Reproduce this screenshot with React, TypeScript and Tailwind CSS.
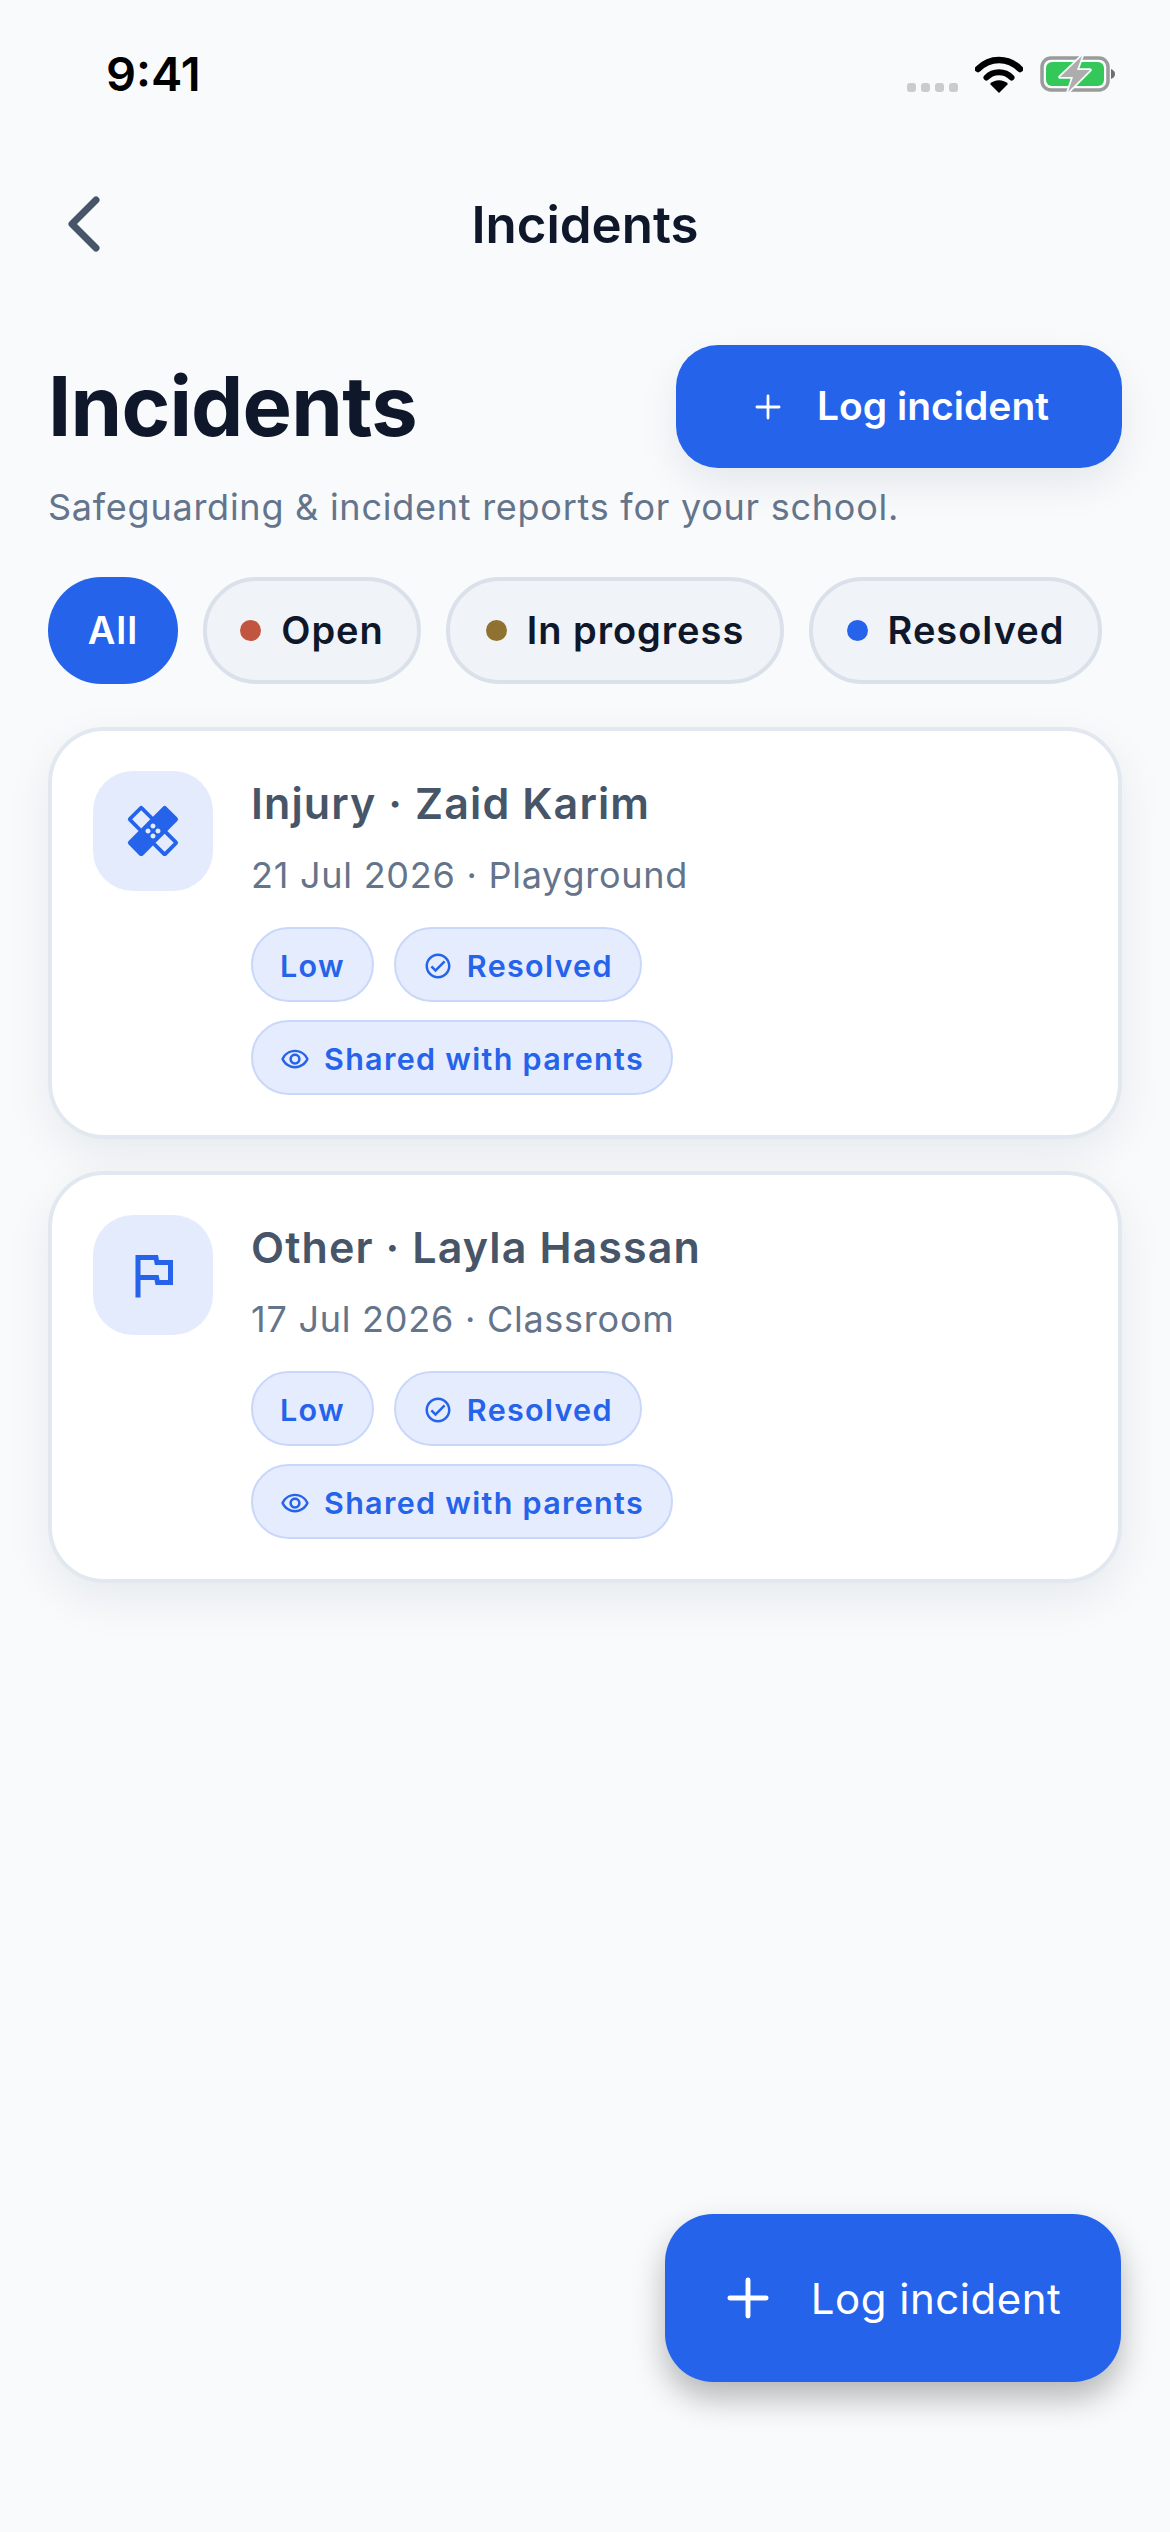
import { ChevronLeft, Plus } from "lucide-react";
import { MdOutlineCheckCircle, MdOutlineFlag, MdOutlineHealing, MdOutlineRemoveRedEye } from "react-icons/md";

const incidents = [
  { id: 1, title: "Injury · Zaid Karim", meta: "21 Jul 2026 · Playground", icon: "injury" },
  { id: 2, title: "Other · Layla Hassan", meta: "17 Jul 2026 · Classroom", icon: "other" },
];

function Wifi() {
  return (
    <svg width="48" height="37" viewBox="0 0 48 37" fill="none">
      <path d="M3 13C15 1 33 1 45 13" stroke="#000" strokeWidth="6.5" strokeLinecap="round" />
      <path d="M11.5 21.5C18 14.5 30 14.5 36.5 21.5" stroke="#000" strokeWidth="6" strokeLinecap="round" />
      <path d="M24 37L15 28C19.5 23 28.5 23 33 28Z" fill="#000" />
    </svg>
  );
}

function Battery() {
  return (
    <svg width="76" height="38" viewBox="0 0 76 38" fill="none">
      <rect x="2" y="3" width="66" height="32" rx="9" stroke="#9b9b9b" strokeWidth="3.5" />
      <rect x="6" y="7" width="58" height="24" rx="6" fill="#34c759" />
      <path d="M71 14c3 1 4 3 4 5s-1 4-4 5z" fill="#6f6f6f" />
      <path d="M42 1L20 22h13l-5 15 22-22H37z" fill="#adadad" stroke="#f8fafc" strokeWidth="3.5" strokeLinejoin="round" paintOrder="stroke" />
    </svg>
  );
}

function StatusBar() {
  return (
    <div className="h-[148px] flex justify-between pl-[106px] pr-[54px]">
      <span className="mt-[48px] h-[52px] text-[47px] leading-[52px] font-semibold text-black">9:41</span>
      <div className="mt-[55px] h-[38px] flex items-end gap-[17px]">
        <div className="flex gap-[5px] mb-[1px]">
          <span className="w-[9px] h-[9px] rounded-[3px] bg-[#c9cbcd]" />
          <span className="w-[9px] h-[9px] rounded-[3px] bg-[#c9cbcd]" />
          <span className="w-[9px] h-[9px] rounded-[3px] bg-[#c9cbcd]" />
          <span className="w-[9px] h-[9px] rounded-[3px] bg-[#c9cbcd]" />
        </div>
        <Wifi />
        <Battery />
      </div>
    </div>
  );
}

function Pill({ label, dot, width }: { label: string; dot: string; width: string }) {
  return (
    <div className={`h-[107px] ${width} flex items-center justify-center gap-[20px] rounded-full border-[4px] border-[#dae1ea] bg-[#f0f3f8]`}>
      <span className={`w-[21px] h-[21px] rounded-full ${dot}`} />
      <span className="text-[38px] font-semibold tracking-[1px] whitespace-nowrap text-[#0f172a]">{label}</span>
    </div>
  );
}

function Tag({ children }: { children: React.ReactNode }) {
  return (
    <div className="h-[75px] px-[27px] pt-[2px] flex items-center gap-[14px] rounded-full border-[2px] border-[#c9d8fa] bg-[#e5ecfd] text-[30.5px] font-semibold tracking-[1.3px] whitespace-nowrap text-[#2563eb]">
      {children}
    </div>
  );
}

function IncidentCard({ title, meta, icon }: { title: string; meta: string; icon: string }) {
  return (
    <div className="h-[412px] flex gap-[38px] rounded-[56px] border-[4px] border-[#e2e8f0] bg-white pl-[41px] pt-[40px] shadow-[0_16px_48px_rgba(15,23,42,0.07)]">
      <div className="w-[120px] h-[120px] flex items-center justify-center rounded-[40px] bg-[#e3ebfd] text-[#2563eb]">
        {icon === "injury" ? <MdOutlineHealing size={60} /> : <MdOutlineFlag size={60} />}
      </div>
      <div className="flex flex-col">
        <h2 className="h-[64px] text-[43px] leading-[64px] font-semibold tracking-[1.1px] text-[#475569]">{title}</h2>
        <p className="mt-[10px] h-[60px] text-[36px] leading-[60px] tracking-[0.75px] text-[#64748b]">{meta}</p>
        <div className="mt-[22px] flex gap-[20px]">
          <Tag>Low</Tag>
          <Tag>
            <MdOutlineCheckCircle size={30} />
            Resolved
          </Tag>
        </div>
        <div className="mt-[18px] flex">
          <Tag>
            <MdOutlineRemoveRedEye size={30} />
            Shared with parents
          </Tag>
        </div>
      </div>
    </div>
  );
}

export default function App() {
  return (
    <div className="relative w-[1170px] h-[2532px] overflow-hidden bg-[#f8fafc] font-['Inter',sans-serif]">
      <StatusBar />

      <div className="relative h-[152px] pt-[2px] flex items-center justify-center">
        <button className="absolute left-[36px] top-[28px] text-[#475569]">
          <ChevronLeft size={96} strokeWidth={1.75} />
        </button>
        <h1 className="text-[51px] font-semibold text-[#0f172a]">Incidents</h1>
      </div>

      <main className="px-[48px] pt-[45px]">
        <div className="h-[123px] flex items-center justify-between">
          <h1 className="text-[83px] font-bold tracking-[-0.8px] text-[#0f172a]">Incidents</h1>
          <button className="w-[446px] h-[123px] flex items-center justify-center gap-[30px] rounded-[42px] bg-[#2563eb] text-white shadow-[0_16px_40px_rgba(15,23,42,0.08)]">
            <Plus size={38} strokeWidth={1.75} />
            <span className="text-[39px] font-semibold">Log incident</span>
          </button>
        </div>

        <p className="mt-[12px] h-[54px] text-[36px] leading-[54px] tracking-[0.75px] text-[#64748b]">
          Safeguarding &amp; incident reports for your school.
        </p>

        <div className="mt-[43px] flex gap-[25px]">
          <div className="h-[107px] w-[130px] flex items-center justify-center rounded-full bg-[#2563eb] text-[38px] font-semibold tracking-[1px] text-white">All</div>
          <Pill label="Open" dot="bg-[#c2553f]" width="w-[218px]" />
          <Pill label="In progress" dot="bg-[#8f7230]" width="w-[338px]" />
          <Pill label="Resolved" dot="bg-[#2563eb]" width="w-[293px]" />
        </div>

        <div className="mt-[43px] flex flex-col gap-[32px]">
          {incidents.map((item) => (
            <IncidentCard key={item.id} title={item.title} meta={item.meta} icon={item.icon} />
          ))}
        </div>
      </main>

      <button className="absolute left-[665px] top-[2214px] w-[456px] h-[168px] pr-[8px] flex items-center justify-center gap-[32px] rounded-[48px] bg-[#2563eb] text-white shadow-[0_16px_32px_rgba(0,0,0,0.28)]">
        <Plus size={62} strokeWidth={1.9} />
        <span className="text-[42px] tracking-[0.5px]">Log incident</span>
      </button>
    </div>
  );
}
